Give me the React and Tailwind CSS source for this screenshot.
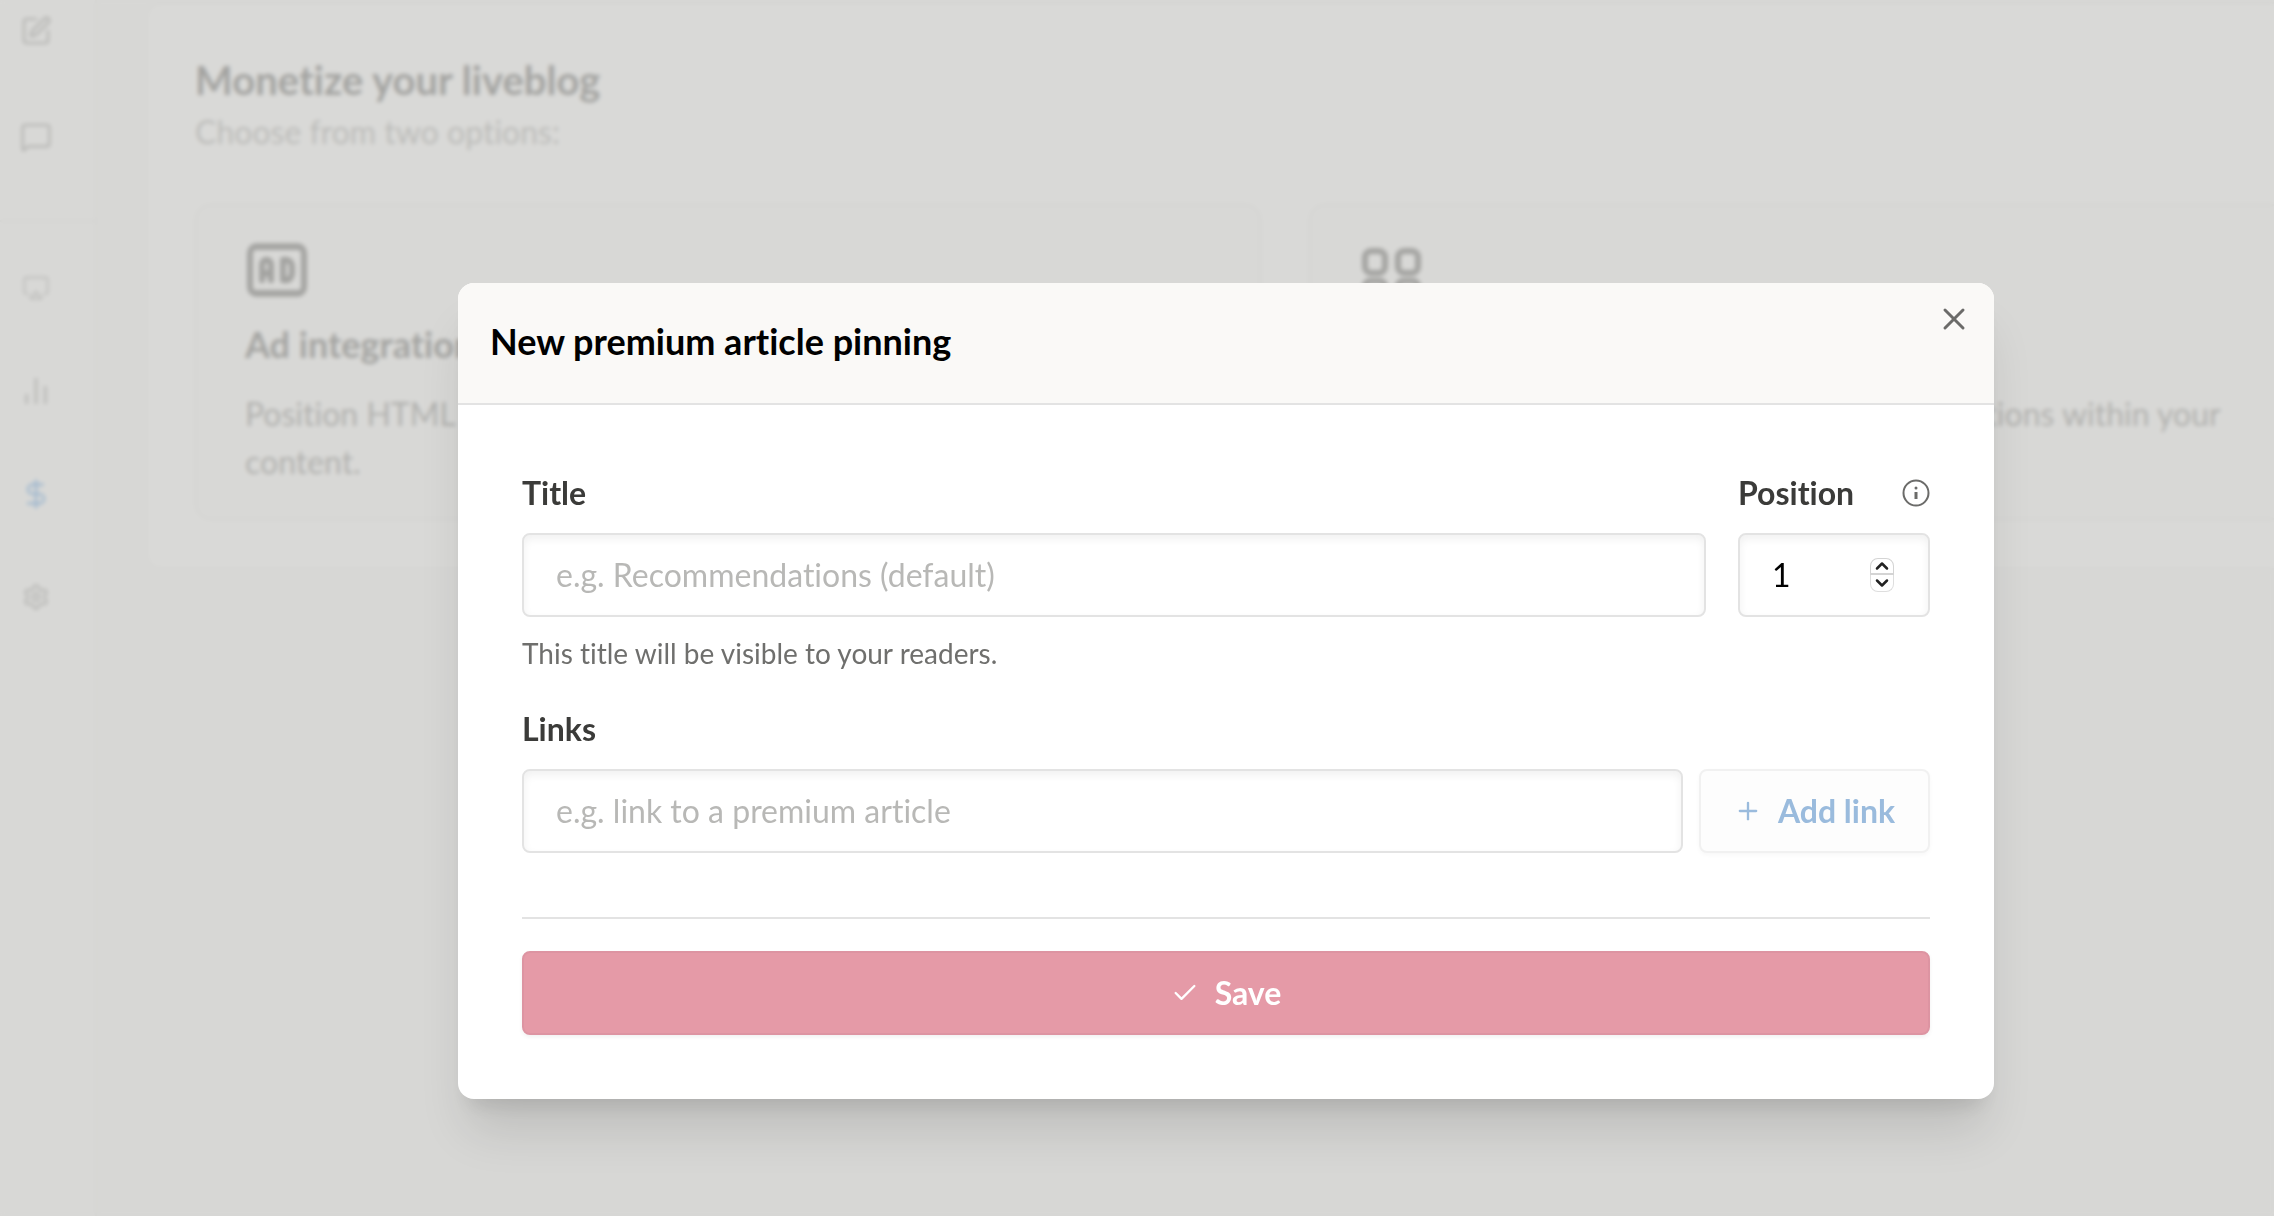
import React, { useState } from "react";
import {
  Airplay,
  ChartNoAxesColumn,
  Check,
  ChevronDown,
  ChevronUp,
  DollarSign,
  MessageSquare,
  Plus,
  Settings,
  SquarePen,
  X,
} from "lucide-react";
import { TbBadgeAd } from "react-icons/tb";

const GridIcon = () => (
  <svg className="w-16 h-16" viewBox="0 0 64 64" fill="none" stroke="currentColor" strokeWidth="6">
    <rect x="6" y="13" width="20" height="22" rx="6" />
    <rect x="39" y="13" width="20" height="22" rx="6" />
    <rect x="6" y="43" width="20" height="20" rx="5" />
    <rect x="39" y="43" width="20" height="20" rx="5" />
  </svg>
);

const InfoIcon = () => (
  <svg className="w-7 h-7" viewBox="0 0 28 28" fill="none" stroke="currentColor" strokeWidth="2">
    <circle cx="14" cy="14" r="12.5" />
    <path d="M14 13v7" strokeWidth="3" />
    <circle cx="14" cy="9" r="1.5" fill="currentColor" stroke="none" />
  </svg>
);

const OptionCard = ({ icon, title, text }) => (
  <div className="flex-1 border-2 border-[#e9e9e8] bg-[#fcfcfc] rounded-2xl px-12 py-8">
    {icon}
    <h3 className="mt-[18px] text-[36px] leading-12 font-bold">{title}</h3>
    <p className="mt-[22px] text-[32px] leading-12 text-[#5c5c5a]">{text}</p>
  </div>
);

const Sidebar = () => (
  <nav className="w-[97px] shrink-0 border-r-2 border-[#ebebea] bg-[#fcfcfc] text-[#7e7e7c]">
    <div className="flex flex-col gap-[74px] pt-[15px] pb-[67px] pl-5 border-b-2 border-[#e9e9e8]">
      <a href="#edit" aria-label="Edit"><SquarePen className="w-8 h-8" /></a>
      <a href="#comments" aria-label="Comments"><MessageSquare className="w-8 h-8" /></a>
    </div>
    <div className="flex flex-col gap-[71px] pt-[50px] pl-5">
      <a href="#display" aria-label="Display"><Airplay className="w-8 h-8 p-0.5 opacity-70" /></a>
      <a href="#stats" aria-label="Statistics"><ChartNoAxesColumn className="w-8 h-8" /></a>
      <a href="#monetize" aria-label="Monetize" className="text-[#2c83dc]"><DollarSign className="w-8 h-8" /></a>
      <a href="#settings" aria-label="Settings"><Settings className="w-8 h-8 p-0.5" /></a>
    </div>
  </nav>
);

const inputClass =
  "h-[84px] w-full rounded-lg border-2 border-[#e3e3e3] bg-white px-8 pb-0.5 text-[32px] text-black placeholder:text-[#b8b8b6] shadow-[inset_0_4px_8px_rgba(0,0,0,0.06)] outline-none";

const labelClass = "text-[32px] leading-12 font-bold text-[#3b3b39]";

const App = () => {
  const [title, setTitle] = useState("");
  const [position, setPosition] = useState(1);
  const [link, setLink] = useState("");

  return (
    <div className="relative min-h-screen overflow-hidden bg-[#f8f8f8] font-[Lato,sans-serif] [font-variant-ligatures:none]">
      {/* Page behind the dialog */}
      <div className="flex min-h-screen text-[#2a2a28]">
        <Sidebar />
        <main className="flex-1 pt-0.5 pl-12 -mr-[151px]">
          <section className="rounded-2xl border-2 border-[#ebebea] bg-white px-12 py-12">
            <h1 className="text-[40px] leading-14 font-bold">Monetize your liveblog</h1>
            <p className="text-[32px] leading-12 text-[#8a8a88]">Choose from two options:</p>
            <div className="mt-12 flex gap-12">
              <OptionCard
                icon={<TbBadgeAd className="w-[72px] h-20 -my-2 -ml-1" preserveAspectRatio="none" />}
                title="Ad integration"
                text="Position HTML code of your own ads anywhere within your liveblog content."
              />
              <OptionCard
                icon={<GridIcon />}
                title="Premium articles"
                text="Pin links to your paid articles at selected positions within your liveblog content."
              />
            </div>
          </section>
        </main>
      </div>

      <div className="absolute inset-0 bg-[rgba(204,204,202,0.75)] backdrop-blur-[2px]" />

      {/* Dialog */}
      <div className="absolute inset-0 flex items-start pt-[283px] pl-[458px] pr-[280px]">
        <div
          role="dialog"
          aria-labelledby="dialog-title"
          className="w-full overflow-hidden rounded-2xl bg-white shadow-[0_40px_50px_-10px_rgba(0,0,0,0.12),0_16px_20px_-10px_rgba(0,0,0,0.1)]"
        >
          <header className="flex items-start justify-between border-b-2 border-[#e3e3e3] bg-[#faf9f7] pl-8 pr-[18px] pb-[38px]">
            <h2 id="dialog-title" className="mt-[34px] text-[36px] leading-12 font-bold text-black">
              New premium article pinning
            </h2>
            <button type="button" aria-label="Close" className="mt-3.5 p-1 text-[#6b6b69]">
              <X className="w-9 h-9" strokeWidth={2} />
            </button>
          </header>

          <form className="p-16" onSubmit={(e) => e.preventDefault()}>
            <div className="flex gap-8">
              <div className="flex flex-1 flex-col gap-4">
                <label htmlFor="title" className={labelClass}>Title</label>
                <input
                  id="title"
                  type="text"
                  placeholder="e.g. Recommendations (default)"
                  value={title}
                  onChange={(e) => setTitle(e.target.value)}
                  className={inputClass}
                />
              </div>
              <div className="flex w-48 flex-col gap-4">
                <div className="flex items-center justify-between">
                  <label htmlFor="position" className={labelClass}>Position</label>
                  <span className="text-[#6b6b69]"><InfoIcon /></span>
                </div>
                <div className="relative">
                  <input
                    id="position"
                    type="number"
                    min="1"
                    value={position}
                    onChange={(e) => setPosition(Number(e.target.value))}
                    className={`${inputClass} [appearance:textfield] [&::-webkit-inner-spin-button]:appearance-none`}
                  />
                  <div className="absolute inset-y-0 right-9 flex flex-col justify-center">
                    <button
                      type="button"
                      aria-label="Increase"
                      onClick={() => setPosition(position + 1)}
                      className="flex h-[17px] w-6 items-center justify-center rounded-t-lg border border-b-2 border-[#d4d4d4] bg-white text-[#222]"
                    >
                      <ChevronUp className="w-5 h-5 shrink-0" strokeWidth={3} />
                    </button>
                    <button
                      type="button"
                      aria-label="Decrease"
                      onClick={() => setPosition(Math.max(1, position - 1))}
                      className="flex h-[17px] w-6 items-center justify-center rounded-b-lg border border-t-0 border-[#dedede] bg-white text-[#222]"
                    >
                      <ChevronDown className="w-5 h-5 shrink-0" strokeWidth={3} />
                    </button>
                  </div>
                </div>
              </div>
            </div>
            <p className="mt-4 text-[28px] leading-10 text-[#6f6f6d]">This title will be visible to your readers.</p>

            <div className="mt-8 flex flex-col gap-4">
              <label htmlFor="link" className={labelClass}>Links</label>
              <div className="flex gap-4">
                <input
                  id="link"
                  type="text"
                  placeholder="e.g. link to a premium article"
                  value={link}
                  onChange={(e) => setLink(e.target.value)}
                  className={inputClass}
                />
                <button
                  type="button"
                  className="flex h-[84px] w-[231px] shrink-0 items-center justify-center gap-4 rounded-lg border-2 border-[#f1f1f1] bg-[#fdfdfd] text-[32px] font-bold text-[#9abbdd] shadow-[0_2px_4px_rgba(0,0,0,0.03)]"
                >
                  <Plus className="w-7 h-7" strokeWidth={2} />
                  Add link
                </button>
              </div>
            </div>

            <div className="mt-16 border-t-2 border-[#e3e3e3] pt-8">
              <button
                type="submit"
                className="flex h-[84px] w-full items-center justify-center gap-4 rounded-lg border-2 border-[#dd94a2] bg-[#e59aa7] text-[32px] font-bold text-white shadow-[0_2px_4px_rgba(0,0,0,0.06)]"
              >
                <Check className="w-7 h-7" strokeWidth={2} />
                Save
              </button>
            </div>
          </form>
        </div>
      </div>
    </div>
  );
};

export default App;
